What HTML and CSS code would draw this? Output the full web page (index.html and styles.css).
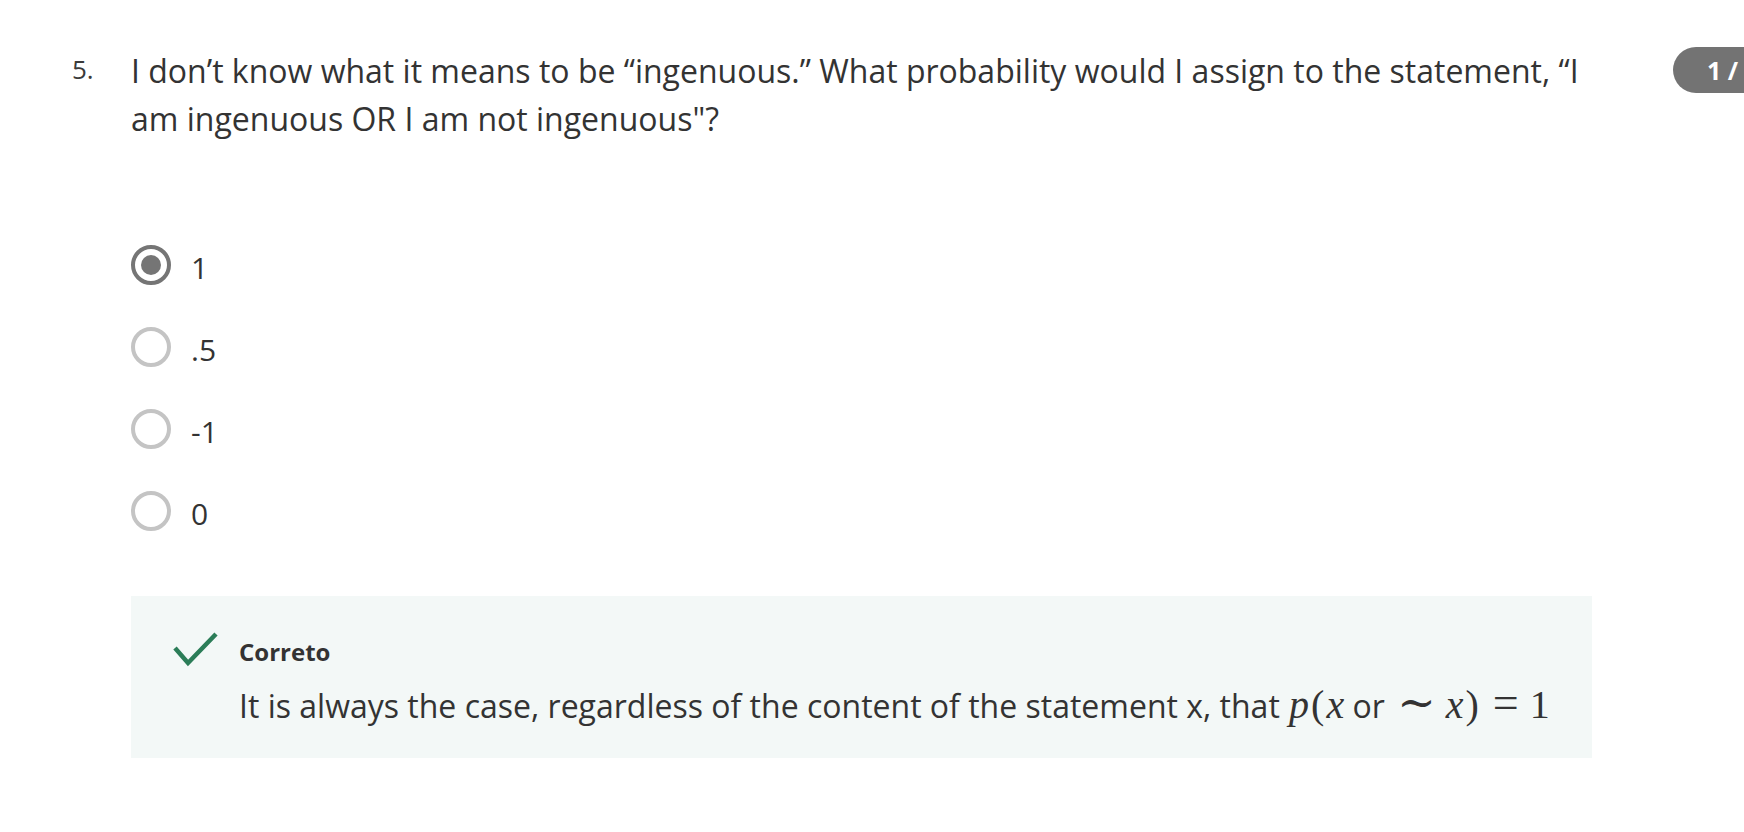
FILE: index.html
```html
<!DOCTYPE html>
<html lang="en">
<head>
<meta charset="utf-8">
<title>Question 5</title>
<link rel="stylesheet" href="styles.css">
</head>
<body>
<div class="page">
  <div class="main">
    <div class="question">
      <div class="num">5.</div>
      <div class="body">
        <p class="prompt">I don’t know what it means to be “ingenuous.” What probability would I assign to the statement, “I am ingenuous OR I am not ingenuous"?</p>
        <div class="options">
          <div class="option"><span class="radio checked"></span><span class="label">1</span></div>
          <div class="option"><span class="radio"></span><span class="label">.5</span></div>
          <div class="option"><span class="radio"></span><span class="label">-1</span></div>
          <div class="option"><span class="radio"></span><span class="label">0</span></div>
        </div>
        <div class="feedback">
          <svg class="check" width="46" height="36" viewBox="0 0 46 36"><polyline points="2,17 15,32 43,3" fill="none" stroke="#2b7d58" stroke-width="4.5"/></svg>
          <div class="fb-text">
            <div class="fb-title">Correto</div>
            <div class="fb-body">It is always the case, regardless of the content of the statement x, that <span class="math"><i class="mi">p</i><span class="mo">(</span><i class="mi">x</i><span class="mtext"> or </span><span class="rel sim">∼</span><i class="mi">x</i><span class="mo">)</span><span class="rel eq">=</span><span class="mn">1</span></span></div>
          </div>
        </div>
      </div>
    </div>
  </div>
  <div class="badge">1 /</div>
</div>
</body>
</html>
```
FILE: styles.css
```css
html, body {
  margin: 0;
  padding: 0;
  background: #ffffff;
}
body {
  font-family: "Open Sans", "Noto Sans", sans-serif;
  color: #333333;
  overflow: hidden;
}
.page {
  display: flex;
  align-items: flex-start;
  width: 1744px;
}
.main {
  width: 1592px;
  flex-shrink: 0;
  padding-left: 72px;
  padding-top: 47px;
  box-sizing: border-box;
}
.question {
  display: flex;
}
.num {
  width: 59px;
  flex-shrink: 0;
  font-size: 26px;
  line-height: 44px;
  color: #3a3a3a;
}
.body {
  flex: 1;
  min-width: 0;
}
.prompt {
  margin: 0;
  font-size: 32px;
  line-height: 48px;
}
.options {
  margin-top: 102px;
  display: flex;
  flex-direction: column;
  gap: 42px;
}
.option {
  display: flex;
  align-items: center;
  height: 40px;
}
.radio {
  width: 40px;
  height: 40px;
  box-sizing: border-box;
  border: 4px solid #c4c4c4;
  border-radius: 50%;
  flex-shrink: 0;
  position: relative;
  background: #fff;
}
.radio.checked {
  border-color: #757575;
}
.radio.checked::after {
  content: "";
  position: absolute;
  left: 6px;
  top: 6px;
  width: 20px;
  height: 20px;
  border-radius: 50%;
  background: #757575;
}
.label {
  margin-left: 20px;
  font-size: 30px;
  line-height: 40px;
  padding-top: 6px;
}
.feedback {
  margin-top: 65px;
  background: #f3f8f7;
  height: 162px;
  box-sizing: border-box;
  padding: 40px 0 0 42px;
  display: flex;
  align-items: flex-start;
}
.check {
  flex-shrink: 0;
  margin-top: -5px;
}
.fb-text {
  margin-left: 20px;
}
.fb-title {
  font-size: 24px;
  font-weight: 700;
  line-height: 32px;
  color: #333;
}
.fb-body {
  font-size: 32px;
  line-height: 48px;
  margin-top: 12px;
  white-space: nowrap;
}
.math {
  font-family: "Liberation Serif", "DejaVu Serif", serif;
  font-size: 40px;
  margin-left: 1px;
}
.mi {
  font-style: italic;
}
.mo {
  margin: 0 2px;
}
.mtext {
  font-family: "Open Sans", "Noto Sans", sans-serif;
  font-size: 32px;
}
.rel {
  font-family: "Liberation Serif", "DejaVu Serif", serif;
  font-size: 46px;
  line-height: 1;
}
.rel.sim {
  margin: 0 10px 0 4px;
}
.rel.eq {
  margin: 0 10px 0 12px;
}
.mn {
  margin-left: 1px;
}
.badge {
  margin-left: 81px;
  margin-top: 47px;
  height: 46px;
  flex-shrink: 0;
  width: 120px;
  background: #737373;
  border-radius: 23px 0 0 23px;
  color: #fff;
  font-weight: 700;
  font-size: 25px;
  line-height: 46px;
  padding-left: 34px;
  box-sizing: border-box;
  white-space: nowrap;
}
```
